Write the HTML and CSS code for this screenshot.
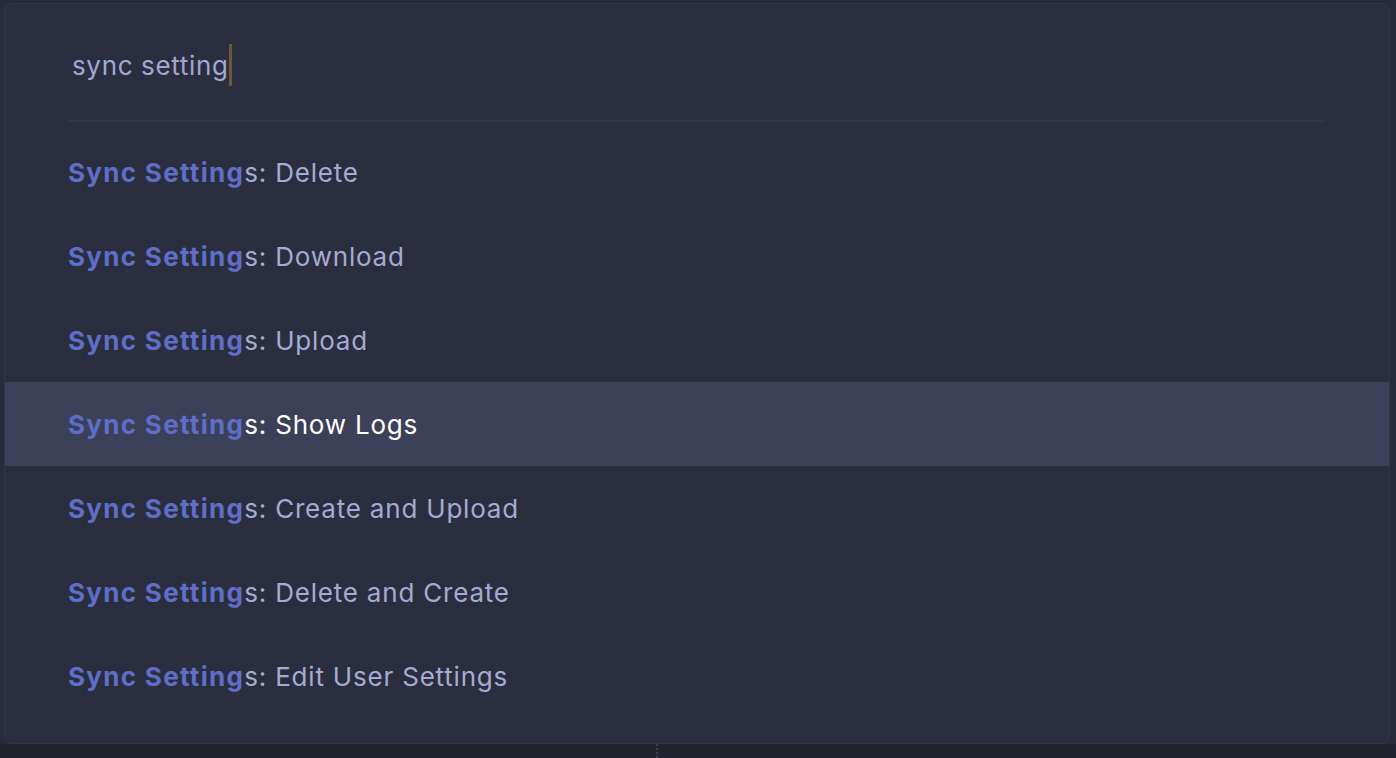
FILE: index.html
```html
<!DOCTYPE html>
<html>
<head>
<meta charset="utf-8">
<link rel="stylesheet" href="styles.css">
</head>
<body>
<div class="palette">
  <div class="input-row">
    <span class="query">sync setting</span><span class="caret"></span>
  </div>
  <div class="separator"></div>
  <ul class="results">
    <li class="item"><span class="match">Sync Setting</span>s: Delete</li>
    <li class="item"><span class="match">Sync Setting</span>s: Download</li>
    <li class="item"><span class="match">Sync Setting</span>s: Upload</li>
    <li class="item selected"><span class="match">Sync Setting</span>s: Show Logs</li>
    <li class="item"><span class="match">Sync Setting</span>s: Create and Upload</li>
    <li class="item"><span class="match">Sync Setting</span>s: Delete and Create</li>
    <li class="item"><span class="match">Sync Setting</span>s: Edit User Settings</li>
  </ul>
</div>
<div class="editor-strip">
  <div class="strip-left"></div>
  <div class="dotted"></div>
</div>
</body>
</html>
```

FILE: styles.css
```css
html, body {
  margin: 0;
  padding: 0;
}
body {
  width: 1396px;
  height: 758px;
  overflow: hidden;
  background: #282b3a;
  font-family: Inter, "Noto Sans", "Liberation Sans", sans-serif;
  display: flex;
  flex-direction: column;
}
.palette {
  box-sizing: border-box;
  margin: 3px 6px 0 4px;
  height: 741px;
  background: #2b2e3e;
  border: 1px solid #34374a;
  border-radius: 8px;
  display: flex;
  flex-direction: column;
  overflow: hidden;
}
.input-row {
  height: 116px;
  display: flex;
  align-items: center;
  padding-left: 67px;
  padding-top: 6px;
  box-sizing: border-box;
}
.query {
  font-size: 26px;
  color: #a0a8d2;
  letter-spacing: 0.65px;
}
.caret {
  display: inline-block;
  width: 3px;
  height: 42px;
  background: #6b5a33;
  margin-left: 0px;
}
.separator {
  height: 2px;
  margin: 0 63px;
  background: #31344a;
}
.results {
  list-style: none;
  margin: 8px 0 0 0;
  padding: 0;
}
.item {
  height: 84px;
  display: flex;
  align-items: center;
  padding-left: 63px;
  font-size: 26px;
  letter-spacing: 0.8px;
  color: #a5abd2;
}
.item.selected {
  background: #3c4058;
  color: #ffffff;
}
.match {
  color: #5f6ec8;
  font-weight: 700;
  letter-spacing: 1.3px;
}
.editor-strip {
  flex: 1;
  background: #21232e;
  display: flex;
}
.strip-left {
  width: 656px;
}
.dotted {
  width: 0;
  border-left: 2px dotted #3b3e50;
}
```
